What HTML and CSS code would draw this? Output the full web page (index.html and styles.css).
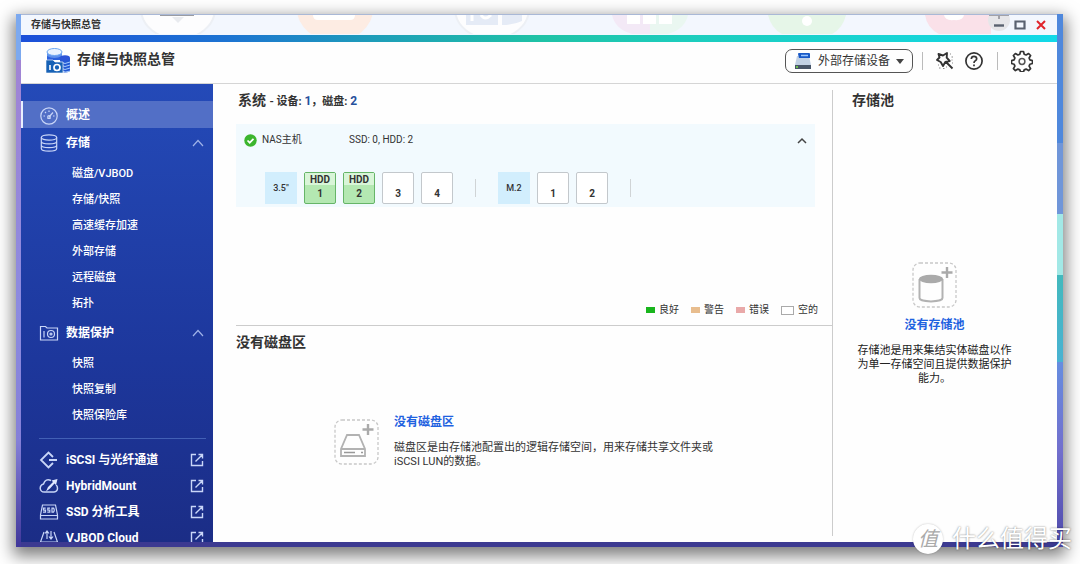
FILE: index.html
```html
<!DOCTYPE html>
<html lang="zh-CN">
<head>
<meta charset="utf-8">
<title>存储与快照总管</title>
<link rel="stylesheet" href="styles.css">
</head>
<body>
<svg class="defs" aria-hidden="true">
  <symbol id="open" viewBox="0 0 14 14"><path d="M6 1.500H1.500v11h11V8M8.500 1.500h4v4M12.300 1.700 5.500 8.500"/></symbol>
  <symbol id="up" viewBox="0 0 12 8"><path d="M1 7l5-5.500L11 7"/></symbol>
</svg>
<div class="desktop">
  <div class="window">
    <div class="titlebar">
      <svg class="dock" width="1036" height="19" viewBox="0 0 1036 19" aria-hidden="true">
        <ellipse cx="157" cy="-6" rx="37" ry="30" fill="#fdfdfe" stroke="#edf0f5" stroke-width="2"/>
        <path d="M139 0h34v1h-34z" fill="#9a9ca2"/><path d="M151 2h12l-6 6z" fill="#e9ebef"/>
        <ellipse cx="314" cy="-6" rx="38" ry="32" fill="#fdece3"/><path d="M292 0h42q0 5-5 5h-32q-5 0-5-5z" fill="#fff"/>
        <ellipse cx="471" cy="-6" rx="37" ry="30" fill="#fdfdfe" stroke="#edf0f5" stroke-width="2"/>
        <path d="M445 0h32v10h-32zM481 0h20v6q-8 4-20 4z" fill="#e5ebf6"/><path d="M451 0v6M460 0q4 6 10 0" stroke="#fff" stroke-width="3" fill="none"/>
        <path d="M591 0h38v19h-18Q594 14 591 0z" fill="#f3e9f6"/><path d="M629 0h38q-3 14-20 19h-18z" fill="#eaf7f1"/><path d="M606 0h13v9h-13zM622 0h13v9h-13zM638 0h13v9h-13z" fill="#fff"/>
        <path d="M747 0h78q-3 13-14 19h-50Q750 13 747 0z" fill="#e6f6e8"/><circle cx="786" cy="6" r="5" fill="#fff"/>
        <path d="M904 0h66v19h-52Q906 13 904 0z" fill="#fae1e9"/><path d="M923 0h20q-1 6-10 5-9 1-10-5z" fill="#fff"/>
        <circle cx="978" cy="5" r="11" fill="#e6e6e9"/><path d="M968 0h20M978 0v4" stroke="#a2a2a8" stroke-width="2"/>
      </svg>
      <span class="titlebar-name">存储与快照总管</span>
      <div class="window-buttons">
        <button aria-label="最小化"><svg width="12" height="12" viewBox="0 0 12 12"><path d="M1 6.500h10" stroke="#5a6270" stroke-width="2.400"/></svg></button>
        <button aria-label="最大化"><svg width="12" height="12" viewBox="0 0 12 12"><path d="M1.500 2.500h9v7h-9z" fill="none" stroke="#5a6270" stroke-width="2.200"/></svg></button>
        <button aria-label="关闭"><svg width="12" height="12" viewBox="0 0 12 12"><path d="M2 2l8 8M10 2l-8 8" stroke="#e0242c" stroke-width="2"/></svg></button>
      </div>
    </div>
    <div class="rainbow"></div>
    <header class="header">
      <svg class="logo" width="26" height="28" viewBox="0 0 26 28" aria-hidden="true">
        <path d="M2 5v8h15V5z" fill="#5f93ec"/><path d="M2 9q7 4 15 0v4H2z" fill="#2b62dd"/><ellipse cx="9.500" cy="5" rx="7.500" ry="3.500" fill="#e9f4ff" stroke="#6ba6f2"/>
        <path d="M15 11v13q5 3 10 0V11z" fill="#2359d4"/><path d="M15 15q5 3 10 0M15 18q5 3 10 0M15 21q5 3 10 0M16 24q5 2 9 0" stroke="#a5c9fb" fill="none"/><ellipse cx="20" cy="11" rx="5" ry="2.800" fill="#2d55d8"/>
        <path d="M1 13h7l2 2h8v11H1z" fill="#1762b6" stroke="#fff" stroke-width=".6"/><path d="M5 18v5" stroke="#fff" stroke-width="1.600"/><circle cx="12" cy="20.500" r="3" fill="none" stroke="#fff" stroke-width="1.700"/>
      </svg>
      <h1>存储与快照总管</h1>
      <div class="tools">
        <button class="device-button">
          <svg width="18" height="18" viewBox="0 0 18 18" aria-hidden="true"><path d="M3 4h12l2 9H1z" fill="#c2d1e4"/><path d="M1 13h16v4H1z" fill="#485568"/><path d="M4 2q0-1 1-1h10q1 0 1 1v4H5z" fill="#1959c7"/><path d="M7 3.500h7" stroke="#9bc7ff" stroke-width="1.500"/><path d="M2 15h2" stroke="#7be34a" stroke-width="1.500"/></svg>
          <span>外部存储设备</span>
          <svg width="8" height="5" viewBox="0 0 8 5" aria-hidden="true"><path d="M0 0h8L4 5z" fill="#444"/></svg>
        </button>
        <i class="tool-line"></i>
        <button class="tool" aria-label="助手"><svg width="20" height="20" viewBox="0 0 20 20"><path d="M3.500 3l4.500 1.500L12 2l-.3 4.700 3 3.300-4.400 1L8 15l-2.300-4L2 9l2.500-2.500zM11 11l6.500 6.500" fill="none" stroke="#333" stroke-width="1.900" stroke-linejoin="round"/><path d="M15 3h1M16.500 6H18M16.500 9h1M3 14h1M4 17h1.500M8 17.500h1.500M11 16h1M17 12h1" stroke="#888" stroke-width="1.200"/></svg></button>
        <button class="tool" aria-label="帮助"><svg width="20" height="20" viewBox="0 0 20 20"><circle cx="10" cy="10" r="8.100" fill="none" stroke="#333" stroke-width="1.700"/><path d="M7.300 8q.2-2.700 2.700-2.700T12.700 7.700q0 1.300-1.400 2.100Q10 10.500 10 12M10 13.500v1.800" fill="none" stroke="#333" stroke-width="1.700"/></svg></button>
        <i class="tool-line"></i>
        <button class="tool gear" aria-label="设置"><svg width="22" height="22" viewBox="0 0 22 22"><path d="M9.500 1.500h3l.7 2.700 1.900.8 2.500-1.500 2 2-1.500 2.500.8 1.900 2.600.7v2.900l-2.600.7-.8 1.900 1.500 2.500-2 2-2.500-1.500-1.900.8-.7 2h-3l-.7-2-1.900-.8-2.500 1.500-2-2 1.500-2.500-.8-1.900-2.600-.7v-2.900l2.600-.7.8-1.900-1.500-2.500 2-2L6.900 5l1.900-.8z" fill="none" stroke="#333" stroke-width="1.700" stroke-linejoin="round"/><circle cx="11" cy="11.500" r="2.900" fill="none" stroke="#555" stroke-width="1.500"/></svg></button>
      </div>
    </header>
    <div class="body">
      <nav class="sidebar">
        <a class="item active" href="#"><svg viewBox="0 0 20 20"><circle cx="10" cy="11" r="8.200"/><path d="M4.500 11h1.500M14 11h1.500M6 7l1 1M10 5.500V7M10 12l4-4.500M8.500 13.500h3"/><circle cx="10" cy="12" r="1.300"/></svg><span>概述</span></a>
        <a class="item" href="#"><svg viewBox="0 0 20 20"><ellipse cx="10" cy="4.500" rx="7.700" ry="2.700"/><path d="M2.300 4.500v11c0 3.600 15.400 3.600 15.400 0v-11M2.300 8.200c0 3.600 15.400 3.600 15.400 0M2.300 11.900c0 3.600 15.400 3.600 15.400 0"/></svg><span>存储</span><svg class="chevron"><use href="#up"/></svg></a>
        <ul class="sub">
          <li><a href="#">磁盘/VJBOD</a></li><li><a href="#">存储/快照</a></li><li><a href="#">高速缓存加速</a></li><li><a href="#">外部存储</a></li><li><a href="#">远程磁盘</a></li><li><a href="#">拓扑</a></li>
        </ul>
        <a class="item" href="#"><svg viewBox="0 0 20 20"><path d="M1.500 3.500h5l1.500 1.500h10.500v12h-17zM5 8v6.500"/><circle cx="12" cy="11" r="3.500"/><circle cx="12" cy="11" r="1"/></svg><span>数据保护</span><svg class="chevron"><use href="#up"/></svg></a>
        <ul class="sub">
          <li><a href="#">快照</a></li><li><a href="#">快照复制</a></li><li><a href="#">快照保险库</a></li>
        </ul>
        <hr>
        <a class="item" href="#"><svg viewBox="0 0 20 20"><path d="M14 7L9.500 2.500 2 10l7.500 7.500L14 13M10 10h8" stroke-width="1.800"/></svg><span>iSCSI 与光纤通道</span><svg class="open"><use href="#open"/></svg></a>
        <a class="item" href="#"><svg viewBox="0 0 20 20"><path d="M12 4.500Q6.500 2 4.500 8 1.200 9 1.200 12.500q.5 3.500 4 3.500h9.800q3.500-.5 3.500-3.800 0-2.200-1.500-3.200" stroke-width="1.500"/><path d="M12.500 4.500L18.500 3l-1.500 6-1.500-1.500-4.500 5-4 3 2-4.500 5-5z" fill="#dfe7ff" stroke="none"/></svg><span>HybridMount</span><svg class="open"><use href="#open"/></svg></a>
        <a class="item" href="#"><svg viewBox="0 0 20 20"><path d="M3.500 3h13l2 10v4h-17v-4zM1.500 13.500h17"/><path d="M6.700 6.200H4.500v2h2v2H4M11 6.200H8.800v2h2v2H8.300M13 6.200v4h1.500q1.500-2 0-4z"/></svg><span>SSD 分析工具</span><svg class="open"><use href="#open"/></svg></a>
        <a class="item" href="#"><svg viewBox="0 0 20 20"><path d="M5 4L1.500 14v4h17v-4L15 4M1.500 14h17M8 11V3M6 5.500L8 3l2 2.500M12 3v8M10 8.500l2 2.500 2-2.500"/></svg><span>VJBOD Cloud</span><svg class="open"><use href="#open"/></svg></a>
      </nav>
      <main class="content">
        <div class="left">
          <section class="system">
            <h2>系统 <small>- 设备: <b>1</b>，磁盘: <b>2</b></small></h2>
            <div class="panel">
              <div class="panel-head">
                <svg width="13" height="13" viewBox="0 0 13 13" aria-hidden="true"><circle cx="6.500" cy="6.500" r="6.200" fill="#3cb52e"/><path d="M3.500 6.500l2.200 2.200 3.800-3.900" fill="none" stroke="#fff" stroke-width="1.700"/></svg>
                <span class="host">NAS主机</span><span>SSD: 0, HDD: 2</span>
                <button class="collapse" aria-label="收起"><svg width="10" height="7" viewBox="0 0 10 7"><path d="M1 6l4-4 4 4" fill="none" stroke="#444" stroke-width="1.500"/></svg></button>
              </div>
              <div class="bays">
                <div class="bay label">3.5"</div>
                <div class="bay disk"><span>HDD</span>1</div>
                <div class="bay disk"><span>HDD</span>2</div>
                <div class="bay">3</div>
                <div class="bay">4</div>
                <i class="bay-line"></i>
                <div class="bay label">M.2</div>
                <div class="bay">1</div>
                <div class="bay">2</div>
                <i class="bay-line"></i>
              </div>
            </div>
            <ul class="legend"><li class="good">良好</li><li class="warn">警告</li><li class="error">错误</li><li class="empty">空的</li></ul>
          </section>
          <section class="volume">
            <h2>没有磁盘区</h2>
            <div class="volume-empty">
              <svg width="46" height="46" viewBox="0 0 46 46" aria-hidden="true"><rect x="1" y="1" width="43" height="44" rx="7" fill="none" stroke="#c8c8c8" stroke-width="1.300" stroke-dasharray="3 2"/><path d="M34 5v11M28.500 10.500h11" stroke="#aaa" stroke-width="2.400"/><path d="M13 16h12l6 14v7H7v-7zM7 30h24" fill="none" stroke="#b2b2b2" stroke-width="1.800"/><path d="M10 33.500h11M27 33.500h2" stroke="#999" stroke-width="1.500"/></svg>
              <div class="volume-text"><a href="#">没有磁盘区</a><p>磁盘区是由存储池配置出的逻辑存储空间，用来存储共享文件夹或<br>iSCSI LUN的数据。</p></div>
            </div>
          </section>
        </div>
        <aside class="pool">
          <h2>存储池</h2>
          <div class="pool-empty">
            <svg width="46" height="46" viewBox="0 0 46 46" aria-hidden="true"><rect x="1" y="1" width="43" height="44" rx="7" fill="none" stroke="#c8c8c8" stroke-width="1.300" stroke-dasharray="3 2"/><path d="M35 5v11M29.500 10.500h11" stroke="#aaa" stroke-width="2.400"/><path d="M7.500 17v19c0 4.500 23 4.500 23 0V17" fill="none" stroke="#b2b2b2" stroke-width="2"/><ellipse cx="19" cy="17" rx="12" ry="4.200" fill="#aaa"/></svg>
            <a href="#">没有存储池</a>
            <p>存储池是用来集结实体磁盘以作为单一存储空间且提供数据保护能力。</p>
          </div>
        </aside>
      </main>
    </div>
  </div>
</div>
<div class="watermark"><span class="seal">值</span><span>什么值得买</span></div>
</body>
</html>
```
FILE: styles.css
```css
* { box-sizing: border-box; }
body {
  margin: 0;
  height: 100vh;
  padding: 14px 17px 17px 16px;
  background: #fff;
  color: #333;
  font: 11px/14px Roboto, "Noto Sans CJK SC", sans-serif;
  overflow: hidden;
}
h1, h2, p, ul { margin: 0; padding: 0; }
ul { list-style: none; }
a { text-decoration: none; }
button { border: 0; padding: 0; background: none; font: inherit; color: inherit; display: flex; align-items: center; }
.defs { position: absolute; width: 0; height: 0; }

.desktop {
  height: 100%;
  padding: 1px 6px 5px 5px;
  background:
    linear-gradient(#7ca9ef 0 46px, #a184d4 46px, #8c8be0 55%, #8580d8 80%, #40379a) left / 5px 100% no-repeat,
    linear-gradient(#4f88dc 0 129px, #7096d9 129px 200px, #a2e8e6 200px 261px, #43b9bd 261px, #49b2d2 348px, #668de0 348px, #726fcd 82%, #4e4aab) right / 6px 100% no-repeat,
    linear-gradient(#a9b8d6 0 1px, #3c3a91 1px);
  box-shadow: 0 6px 15px 3px rgba(0, 0, 0, .5);
}
.window { height: 100%; display: flex; flex-direction: column; background: #fefefe; overflow: hidden; }

.titlebar { position: relative; flex: none; height: 20px; padding: 0 10px; display: flex; align-items: center; justify-content: space-between; background: #f3f7fe; overflow: hidden; }
.dock { position: absolute; left: 0; top: 0; }
.titlebar-name { position: relative; font-size: 10px; font-weight: 700; }
.window-buttons { position: relative; display: flex; gap: 9px; }
.rainbow { flex: none; height: 7px; background: linear-gradient(90deg, #1c4fd9, #1d74d2 20%, #1e9db9 34%, #1fc2a6 50%, #1dcdbd 64%, #12d9e8); }

.header { flex: none; height: 42px; padding: 0 24px 3px; display: flex; align-items: center; border-bottom: 1px solid #d5d5d5; }
.header h1 { margin-left: 6px; font-size: 14px; line-height: 20px; font-weight: 700; padding-bottom: 4px; }
.tools { margin-left: auto; display: flex; align-items: center; }
.device-button { height: 24px; padding: 0 8px; gap: 6px; border: 1px solid #555; border-radius: 7px; font-size: 12px; }
.tool-line { width: 1px; height: 18px; background: #bbb; margin: 0 12px 0 9px; }
.tool + .tool { margin-left: 9px; }
.tool + .tool-line { margin: 0 13px; }

.body { flex: 1; min-height: 0; display: flex; }
.sidebar { flex: none; width: 192px; padding-top: 17px; overflow: hidden; background: linear-gradient(#244ab8, #1d379c 60%, #1b2d86); color: #fff; }
.sidebar a { color: #fff; }
.item { height: 26px; padding: 0 9px 0 18px; display: flex; align-items: center; gap: 7px; font-size: 12px; font-weight: 700; }
.item svg { flex: none; width: 20px; height: 20px; fill: none; stroke: #c9d6f8; stroke-width: 1.200; }
.item.active { height: 27px; padding-left: 16px; margin-bottom: 2px; border-left: 2px solid #e9f0ff; background: #526fc6; }
.item .chevron { width: 12px; height: 8px; margin-left: auto; stroke: #9fb2e8; }
.item .open { width: 14px; height: 14px; margin-left: auto; stroke-width: 1.400; }
.sub { margin: 5px 0 3px; }
.sub a { display: block; height: 26px; padding-left: 51px; line-height: 26px; font-weight: 500; }
.sidebar hr { height: 1px; margin: 9px 7px 8px 18px; border: 0; background: #4260b5; }

.content { flex: 1; min-width: 0; display: flex; padding: 6px 0; }
.left { flex: 1; min-width: 0; padding-left: 23px; border-right: 1px solid #ccc; display: flex; flex-direction: column; }
h2 { font-size: 14px; line-height: 20px; font-weight: 700; color: #333; }
h2 small { font-size: 11px; font-weight: 700; }
h2 b { font-size: 12px; font-weight: 700; color: #25509c; }
.system { flex: none; border-bottom: 1px solid #ccc; }
.system h2 { padding-left: 2px; margin-bottom: 12px; }
.panel { margin-right: 17px; background: #f2fafe; padding-bottom: 3px; }
.panel-head { height: 32px; padding: 0 8px; display: flex; align-items: center; font-size: 10px; }
.host { width: 87px; margin-left: 5px; }
.collapse { margin-left: auto; }
.bays { display: flex; align-items: center; gap: 7px; padding: 16px 0 0 29px; }
.bay { width: 32px; height: 32px; padding-top: 12px; border: 1px solid #c3c8cc; border-radius: 2px; background: #fff; text-align: center; font-size: 10px; line-height: 18px; font-weight: 700; }
.bay.label { padding: 0; border: 0; border-radius: 0; line-height: 32px; font-size: 9px; font-weight: 500; background: #d2eefd; }
.bay.disk { padding: 0; border-color: #66b568; background: #b4e8b2; }
.bay span { display: block; height: 12px; line-height: 13px; background: #d9f5d8; font-size: 10px; }
.bay-line { width: 1px; height: 18px; margin: 0 15px; background: #d0d4d6; }
.legend { display: flex; justify-content: flex-end; gap: 12px; margin: 96px 14px 8px 0; font-size: 10px; }
.legend li { display: flex; align-items: center; gap: 4px; }
.legend li::before { content: ""; width: 9px; height: 6px; background: #19b51d; }
.legend .warn::before { background: #e8bd8e; }
.legend .error::before { background: #e9a9a9; }
.legend .empty::before { width: 11px; height: 7px; border: 1px solid #aaa; background: #fff; }

.volume { flex: 1; padding-top: 6px; }
.volume-empty { display: flex; gap: 14px; padding: 60px 16px 0 98px; }
.volume-empty > svg { flex: none; margin-top: 7px; }
.volume a, .pool a { font-size: 12px; line-height: 20px; font-weight: 700; color: #1f62e0; }
.volume-text p { margin-top: 9px; }

.pool { width: 224px; flex: none; padding-left: 19px; }
.pool-empty { margin: 152px 44px 0 4px; display: flex; flex-direction: column; align-items: center; text-align: center; color: #222; }
.pool-empty a { margin: 7px 0 9px; }

.watermark { position: absolute; right: 8px; bottom: 10px; display: flex; align-items: center; gap: 9px; color: #fff; font-size: 24px; line-height: 30px; text-shadow: 0 0 2px rgba(0, 0, 0, .55); }
.seal { width: 30px; height: 30px; border-radius: 50%; background: #fff; color: #aaa; font-size: 20px; font-style: italic; text-align: center; text-shadow: none; box-shadow: 0 0 2px rgba(0, 0, 0, .25); }
```
